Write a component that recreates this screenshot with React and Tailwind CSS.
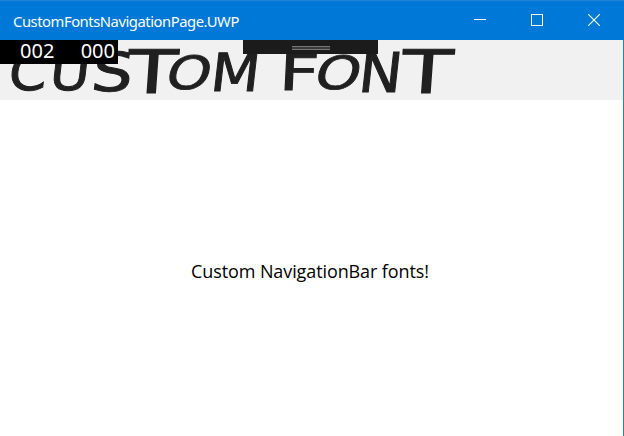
import React from "react";

const letters = [
  ["C", "w-[41px] origin-left -skew-x-6 scale-x-[1.1]"],
  ["U", "w-[42px] origin-left -skew-x-6 scale-x-[1.1]"],
  ["S", "w-[36px] origin-left -skew-x-6 scale-x-[1.3] scale-y-[1.08]"],
  ["T", "w-[39px] origin-left -skew-x-3 scale-x-[1.62] scale-y-[1.2]"],
  ["O", "w-[44px] origin-left -skew-x-12 scale-x-[1.13] scale-y-[.92]"],
  ["M", "w-[45px] origin-left -skew-x-6 scale-x-[1.14] scale-y-[1.05]"],
  [" ", "w-[23px]"],
  ["F", "w-[37px] origin-left -skew-x-2 scale-x-[1.4]"],
  ["O", "w-[43px] origin-left -skew-x-12 scale-x-[1.15] scale-y-[.92]"],
  ["N", "w-[43px] origin-left -skew-x-6 scale-x-[1.16] scale-y-[1.1]"],
  ["T", "w-[52px] origin-left -skew-x-3 scale-x-[1.66] scale-y-[1.2]"],
];

function TitleBar() {
  return (
    <header className="flex h-10 shrink-0 items-center border-t border-[#1b86d6] bg-[#0078d7] text-white">
      <h1 className="ml-[13px] w-[438px] whitespace-nowrap font-['Noto_Sans',sans-serif] text-[15px] leading-5 tracking-[-0.46px]">
        <span className="inline-block origin-left scale-x-[.985]">CustomFontsNavigationPage.UWP</span>
      </h1>
      <div className="flex flex-1 items-center">
        <button className="flex h-10 w-[57px] shrink-0 items-center justify-center pb-px" aria-label="Minimize">
          <svg width="12" height="12" viewBox="0 0 12 12" shapeRendering="crispEdges">
            <path d="M0 5.5h12" stroke="currentColor" />
          </svg>
        </button>
        <button className="flex h-10 w-[57px] shrink-0 items-center justify-center pb-px" aria-label="Maximize">
          <svg width="12" height="12" viewBox="0 0 12 12" shapeRendering="crispEdges">
            <path d="M.5.5h11v11H.5z" fill="none" stroke="currentColor" />
          </svg>
        </button>
        <button className="flex h-10 w-[57px] shrink-0 items-center justify-center pb-px" aria-label="Close">
          <svg width="12" height="12" viewBox="0 0 12 12">
            <path d="M0 0l12 12M12 0L0 12" stroke="currentColor" strokeWidth="1.1" />
          </svg>
        </button>
      </div>
    </header>
  );
}

export default function App() {
  return (
    <div className="flex h-[436px] w-[624px] flex-col overflow-hidden bg-white font-['Open_Sans','Noto_Sans',sans-serif]">
      <TitleBar />
      <div className="flex flex-1 flex-col border-r border-[#2a7fc9]">
        <nav className="relative h-[60px] shrink-0 bg-[#f1f1f1]">
          <h2 className="flex pl-[9px] pt-[8px] font-['DejaVu_Sans',sans-serif] text-[50px] leading-[50px] text-[#202020] [-webkit-text-stroke:0.9px_#202020]">
            {letters.map(([letter, shape], i) => (
              <span key={i} className="inline-block shrink-0 whitespace-pre">
                <span className={`block ${shape}`}>{letter}</span>
              </span>
            ))}
          </h2>
          <div className="absolute left-0 top-0 flex h-6 w-[118px] justify-between bg-black pl-[20px] pr-[3px] font-['Noto_Sans',sans-serif] text-[20px] leading-[22px] text-white">
            <span>002</span>
            <span>000</span>
          </div>
          <div className="absolute left-[243px] top-0 flex h-[14px] w-[135px] items-center justify-center bg-[#1b1b1b]">
            <div className="mt-[2px] h-1 w-[38px] border-y border-[#777] bg-[#3a3a3a]" />
          </div>
        </nav>
        <main className="flex flex-1 items-center justify-center pr-[3px] pt-[5px]">
          <p className="whitespace-nowrap text-[18px] leading-6 tracking-[-0.1px] text-black">
            Custom NavigationBar fonts!
          </p>
        </main>
      </div>
    </div>
  );
}
